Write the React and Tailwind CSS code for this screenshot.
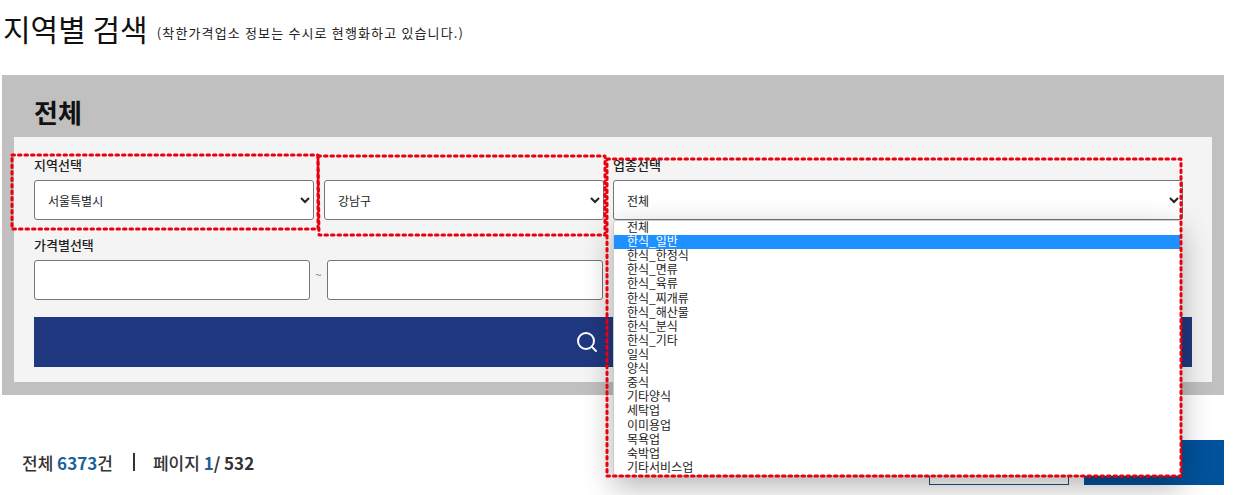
import { Search } from "lucide-react";

const font = '"Noto Sans CJK KR", "Noto Sans", sans-serif';

const options = [
  "전체",
  "한식_일반",
  "한식_한정식",
  "한식_면류",
  "한식_육류",
  "한식_찌개류",
  "한식_해산물",
  "한식_분식",
  "한식_기타",
  "일식",
  "양식",
  "중식",
  "기타양식",
  "세탁업",
  "이미용업",
  "목욕업",
  "숙박업",
  "기타서비스업",
];

function Select({ value, className }) {
  return (
    <select
      defaultValue={value}
      className={`h-10 rounded-[3px] border border-[#767676] bg-white pl-[9px] text-[12px] text-[#222] ${className}`}
    >
      <option>{value}</option>
    </select>
  );
}

export default function App() {
  return (
    <div className="relative h-[495px] overflow-hidden bg-white" style={{ fontFamily: font }}>
      {/* 제목 */}
      <div className="flex h-[75px] items-start pl-[3px] pt-[8px]">
        <h1 className="text-[30px] leading-[40px] font-normal text-[#111]">지역별 검색</h1>
        <span className="ml-[9px] mt-[17px] text-[13px] leading-[16px] tracking-[1.15px] text-[#222]">
          (착한가격업소 정보는 수시로 현행화하고 있습니다.)
        </span>
      </div>

      {/* 검색 패널 */}
      <div className="ml-[2px] h-[320px] w-[1222px] bg-[#c0c0c0] px-3 pb-[13px]">
        <h2 className="h-[62px] pl-5 pt-[19px] text-[26px] leading-[36px] font-bold text-[#111]">전체</h2>
        <div className="h-[245px] bg-[#f4f4f4] px-5">
          <div className="flex pt-[19px]">
            <div className="w-[290px]">
              <p className="h-[24px] text-[13px] leading-[18px] font-medium text-[#222]">지역선택</p>
              <Select value="서울특별시" className="w-[280px]" />
            </div>
            <div className="w-[289px] pt-[24px]">
              <Select value="강남구" className="w-[280px]" />
            </div>
            <div className="relative">
              <p className="h-[24px] text-[13px] leading-[18px] font-medium text-[#222]">업종선택</p>
              <Select value="전체" className="w-[570px]" />
              <ul className="absolute left-0 top-[64px] z-10 h-[256px] w-[568px] rounded-[3px] border border-[#ccc] bg-white shadow-[0_10px_30px_rgba(0,0,0,0.3)]">
                {options.map((o) => (
                  <li
                    key={o}
                    className={`h-[14.12px] pl-[13px] text-[12px] leading-[12px] ${
                      o === "한식_일반" ? "bg-[#1e90ff] text-white" : "text-[#222]"
                    }`}
                  >
                    {o}
                  </li>
                ))}
              </ul>
            </div>
          </div>

          <p className="mt-[16px] h-[24px] text-[13px] leading-[18px] font-medium text-[#222]">가격별선택</p>
          <div className="flex items-start">
            <input className="h-10 w-[276px] rounded-[3px] border border-[#767676] bg-white" />
            <span className="w-[17px] pt-[6px] text-center text-[11px] text-[#777]">~</span>
            <input className="h-10 w-[276px] rounded-[3px] border border-[#767676] bg-white" />
          </div>

          <button className="mt-[17px] flex h-[50px] w-full items-center justify-center bg-[#203880] pr-[52px] text-white">
            <Search size={24} strokeWidth={2} />
          </button>
        </div>
      </div>

      {/* 하단 건수 */}
      <div className="flex h-[100px] items-start pl-[22px] pt-[45px] text-[17px] leading-[46px] font-medium text-[#333]">
        <span>
          전체 <span className="font-semibold text-[#1a6299]">6373</span>건
        </span>
        <span className="ml-[20px] mr-[18px] mt-[13px] h-[18px] w-[2px] bg-[#333]" />
        <span>
          페이지 <span className="font-semibold text-[#1a6299]">1</span>
          <span className="font-semibold">/ 532</span>
        </span>
        <div className="ml-auto mr-5 flex gap-[15px]">
          <div className="h-[45px] w-[140px] border border-[#1c4f86]" />
          <div className="h-[45px] w-[140px] bg-[#00529b]" />
        </div>
      </div>

      {/* 빨간 점선 표시 */}
      <svg className="pointer-events-none absolute inset-0 z-20" width="1244" height="495" fill="none">
        <g stroke="#e8000d" strokeWidth="3" strokeDasharray="2.5 4" strokeLinecap="round" strokeLinejoin="round">
          <path d="M12 155H318V229H12Z" />
          <path d="M318 156H605V235H319Z" />
          <path d="M607 159H1181V476H607Z" />
        </g>
      </svg>
    </div>
  );
}
